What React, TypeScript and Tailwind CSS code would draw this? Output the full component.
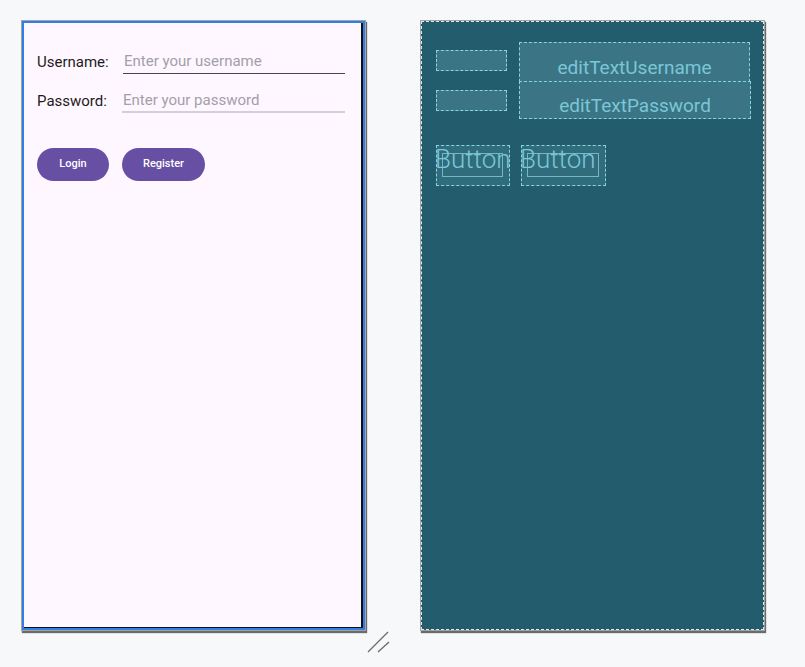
import React from 'react'

function PhonePreview() {
  return (
    <div className="relative h-[611px] w-[345px] shrink-0 border border-[#a3a3a3] shadow-[1px_2px_1px_#6b6b6b]">
      <div className="h-full w-full border-2 border-[#2f7fe6]">
        <div className="h-full w-full border-r-2 border-b border-[#111] bg-[#fef7ff] pl-[13px] pt-[27px]">
          <div className="flex items-end">
            <span className="w-[86px] text-[15px] text-[#1d1b20]">Username:</span>
            <div className="w-[222px] border-b border-[#49454f] pl-[1px] text-[15px] text-[#a39fa8]">
              Enter your username
            </div>
          </div>
          <div className="mt-[15px] flex items-end">
            <span className="w-[85px] pb-[1px] text-[15px] text-[#1d1b20]">Password:</span>
            <div className="w-[223px] border-b-2 border-[#d4cfd9] pl-[1px] text-[15px] text-[#a39fa8]">
              Enter your password
            </div>
          </div>
          <div className="mt-[35px] flex gap-[13px]">
            <button className="h-[33px] w-[72px] rounded-full bg-[#6750a4] text-[11px] font-medium text-white">
              Login
            </button>
            <button className="h-[33px] w-[83px] rounded-full bg-[#6750a4] text-[11px] font-medium text-white">
              Register
            </button>
          </div>
        </div>
      </div>
    </div>
  )
}

function BlueprintBox({ className, children }: { className: string; children?: React.ReactNode }) {
  return (
    <div className={`border border-dashed border-[#86d3e4] bg-[#3b7585] ${className}`}>
      {children}
    </div>
  )
}

function BlueprintButton({ width }: { width: string }) {
  return (
    <div className={`relative h-[41px] ${width} overflow-visible border border-dashed border-[#86d3e4] bg-[#316c7c]`}>
      <div className="absolute left-[5px] right-[6px] top-[7px] h-[24px] border border-[#6fb9c9]" />
      <span className="absolute left-[-2px] top-[-4px] whitespace-nowrap text-[26px] font-light leading-[34px] text-[#7cc6d6]">
        Button
      </span>
    </div>
  )
}

function BlueprintPreview() {
  return (
    <div className="h-[611px] w-[345px] shrink-0 border border-[#a3a3a3] shadow-[1px_2px_1px_#6b6b6b]">
      <div className="h-full w-full border border-dashed border-[#dfe9ec] bg-[#235c6d] pl-[14px] pt-[20px]">
        <div className="flex gap-[12px]">
          <div className="flex w-[71px] flex-col">
            <BlueprintBox className="mt-[8px] h-[21px] w-[71px]" />
            <BlueprintBox className="mt-[19px] h-[21px] w-[71px]" />
          </div>
          <div className="flex flex-col">
            <BlueprintBox className="h-[40px] w-[231px] pt-[14px] text-center text-[19px] leading-[22px] text-[#7cc6d6]">
              editTextUsername
            </BlueprintBox>
            <BlueprintBox className="-mt-px h-[38px] w-[232px] pt-[13px] text-center text-[19px] leading-[22px] text-[#7cc6d6]">
              editTextPassword
            </BlueprintBox>
          </div>
        </div>
        <div className="mt-[26px] flex gap-[11px]">
          <BlueprintButton width="w-[74px]" />
          <BlueprintButton width="w-[85px]" />
        </div>
      </div>
    </div>
  )
}

export default function App() {
  return (
    <div
      className="relative h-[667px] w-[805px] overflow-hidden bg-[#f7f8fa]"
      style={{ fontFamily: 'Roboto, "Noto Sans", sans-serif' }}
    >
      <div className="flex gap-[54px] pl-[21px] pt-[20px]">
        <PhonePreview />
        <BlueprintPreview />
      </div>
      <svg className="absolute left-[366px] top-[630px]" width="26" height="26" viewBox="0 0 26 26">
        <line x1="2" y1="22" x2="22" y2="2" stroke="#6b6b6b" strokeWidth="1.3" />
        <line x1="12" y1="22" x2="23" y2="12" stroke="#6b6b6b" strokeWidth="1.3" />
      </svg>
    </div>
  )
}
